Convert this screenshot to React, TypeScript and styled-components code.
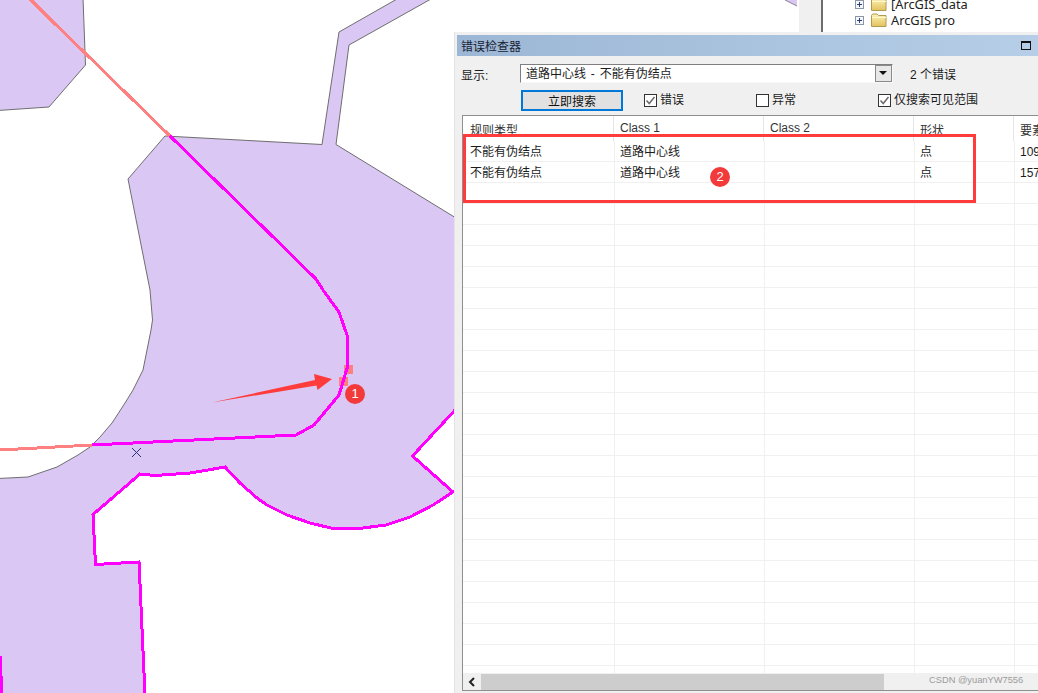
import React from "react";
import styled, { createGlobalStyle } from "styled-components";

const COLUMNS = ["规则类型", "Class 1", "Class 2", "形状", "要素类"];
const ERRORS = [
  ["不能有伪结点", "道路中心线", "", "点", "1094"],
  ["不能有伪结点", "道路中心线", "", "点", "1573"],
];
const ROW_COUNT = 26;

// shared outline of the lower road edge, used for the fill and the magenta line
const LOWER_EDGE =
  "L412.5 456 L453 492 L433 505 L410 517 L386 525 L363 528 H331 L310 523 L287 515 L267 505 L257 498 L240 483 L225 467 L208 470 L190 473 L155 475.5 L140 474 L93 514.5 L95.5 564.5 L139 562 L145 695";

const CheckMark = () => (
  <svg width="11" height="11" viewBox="0 0 11 11">
    <path d="M1.5 5.5 L4.2 8.5 L9.5 2" fill="none" stroke="#6b6b6b" strokeWidth="1.5" />
  </svg>
);

const Folder = () => (
  <svg width="16" height="14" viewBox="0 0 16 14">
    <defs>
      <linearGradient id="folderFill" x1="0" y1="0" x2="0" y2="1">
        <stop offset="0" stopColor="#fdf3b8" />
        <stop offset="1" stopColor="#e2c25c" />
      </linearGradient>
    </defs>
    <path d="M0.5 2.5 L1.5 1 H6 L7.5 2.5 H15 V13.5 H0.5 Z" fill="url(#folderFill)" stroke="#b19a52" />
    <path d="M1 4.5 H15" stroke="#fff8d0" />
  </svg>
);

const MapView = () => (
  <MapSvg viewBox="0 0 454 693">
    <g fill="#dac7f4" stroke="#6e6e6e" strokeWidth="1">
      <path d="M-2 -2 H83 L85.5 65 L49 107 L-2 110.5 Z" />
      <path
        d={`M165 136 L322 144.5 L339 32 L397 -1 H431 L349 45 L336 144.5 L456 218 V409 ${LOWER_EDGE} H-2 V478.5 L28 477 L57 467 L78 455 L90 447 L100 437 L112 423 L125 403 L133 390 L143 370 L148 345 L151 330 L152.5 320 L150 290 L128 179 Z`}
      />
    </g>
    <rect x="344" y="365" width="9" height="9" fill="#ff8080" />
    <rect x="339" y="377" width="9" height="9" fill="#ff8080" />
    <g fill="none" strokeWidth="3" shapeRendering="crispEdges">
      <path d="M30 -1 L52 21 L85 53 L128 95 L170 136" stroke="#ff8080" />
      <path d="M92 445 L0 450" stroke="#ff8080" />
      <path
        d="M170 136 L218 183 L266 230 L316 279 L323 290 L339 312 L347 335 L348 365 L339 395 L314 425 L296 435 L92 445"
        stroke="#ff00ff"
      />
      <path d={`M456 409 ${LOWER_EDGE}`} stroke="#ff00ff" />
      <path d="M0 656 L2 695" stroke="#ff00ff" />
    </g>
    <path d="M132 448 L141 457 M141 448 L132 457" stroke="#26337e" strokeWidth="1" />
    <path d="M212 402.5 L315 380 L314 374 L332 379 L317.5 390 L316.5 385.5 Z" fill="#ff3b3b" />
  </MapSvg>
);

export default function App() {
  return (
    <>
      <GlobalStyle />
      <Screen>
        <MapPane>
          <MapView />
          <Badge $left={345} $top={384}>1</Badge>
        </MapPane>
        <RightColumn>
          <TopStrip>
            <CornerSvg viewBox="0 0 345 32">
              <path d="M331 0 L343 6 V0 Z" fill="#dac7f4" />
              <path d="M331 0 L343 6" stroke="#8a8296" fill="none" />
            </CornerSvg>
            <DockGutter />
            <Tree>
              <TreeRow>
                <PlusBox />
                <Folder />
                <span>[ArcGIS_data</span>
              </TreeRow>
              <TreeRow>
                <PlusBox />
                <Folder />
                <span>ArcGIS pro</span>
              </TreeRow>
            </Tree>
          </TopStrip>
          <Panel>
            <TitleBar>
              <span>错误检查器</span>
              <RestoreIcon />
            </TitleBar>
            <Toolbar>
              <ShowRow>
                <ShowLabel>显示:</ShowLabel>
                <SelectBox>
                  <span>道路中心线 - 不能有伪结点</span>
                  <SelectArrow />
                </SelectBox>
                <ErrorCount>2 个错误</ErrorCount>
              </ShowRow>
              <ActionRow>
                <SearchButton>立即搜索</SearchButton>
                <CheckItem $width={112}>
                  <CheckBox><CheckMark /></CheckBox>
                  错误
                </CheckItem>
                <CheckItem $width={122}>
                  <CheckBox />
                  异常
                </CheckItem>
                <CheckItem $width={130}>
                  <CheckBox><CheckMark /></CheckBox>
                  仅搜索可见范围
                </CheckItem>
              </ActionRow>
            </Toolbar>
            <TableFrame>
              <HeaderRow>
                {COLUMNS.map((name) => (
                  <HeaderCell key={name}>{name}</HeaderCell>
                ))}
              </HeaderRow>
              <TableBody>
                {Array.from({ length: ROW_COUNT }, (_, i) => (
                  <BodyRow key={i}>
                    {COLUMNS.map((name, c) => (
                      <BodyCell key={name}>{ERRORS[i]?.[c]}</BodyCell>
                    ))}
                  </BodyRow>
                ))}
              </TableBody>
              <ScrollBar>
                <ScrollArrow>
                  <svg width="8" height="10" viewBox="0 0 8 10">
                    <path d="M6 1 L2 5 L6 9" fill="none" stroke="#222" strokeWidth="2" />
                  </svg>
                </ScrollArrow>
                <ScrollThumb />
              </ScrollBar>
              <RedBox />
              <Badge $left={247} $top={51}>2</Badge>
              <Watermark>CSDN @yuanYW7556</Watermark>
            </TableFrame>
          </Panel>
        </RightColumn>
      </Screen>
    </>
  );
}

const GlobalStyle = createGlobalStyle`
  html, body {
    margin: 0;
    padding: 0;
    background: #fff;
  }
  body {
    font-family: "Liberation Sans", "Noto Sans CJK SC", sans-serif;
    font-size: 12px;
    color: #1c1c1c;
  }
`;

const Screen = styled.div`
  display: flex;
  width: 1038px;
  height: 693px;
  overflow: hidden;
`;

const MapPane = styled.div`
  position: relative;
  flex: 0 0 454px;
  height: 693px;
  z-index: 1;
`;

const MapSvg = styled.svg`
  display: block;
  width: 454px;
  height: 693px;
`;

const Badge = styled.div<{ $left: number; $top: number }>`
  position: absolute;
  left: ${(p) => p.$left}px;
  top: ${(p) => p.$top}px;
  width: 20px;
  height: 20px;
  border-radius: 50%;
  background: #f23a3a;
  color: #fff;
  font-size: 13px;
  line-height: 20px;
  text-align: center;
  z-index: 3;
`;

const RightColumn = styled.div`
  flex: 0 0 584px;
  min-width: 0;
  display: flex;
  flex-direction: column;
  height: 693px;
  overflow: hidden;
`;

const TopStrip = styled.div`
  flex: 0 0 32px;
  display: flex;
  overflow: hidden;
  background: #fff;
`;

const CornerSvg = styled.svg`
  flex: 0 0 345px;
  height: 32px;
`;

const DockGutter = styled.div`
  flex: 0 0 22px;
  background: #f0f0f0;
  border-right: 2px solid #6d6d6d;
`;

const Tree = styled.div`
  flex: 1;
  padding: 0 0 0 32px;
  margin-top: -4px;
  font-family: "Noto Sans", "Noto Sans CJK SC", sans-serif;
  font-size: 12.8px;
  color: #222;
`;

const TreeRow = styled.div`
  display: flex;
  align-items: center;
  height: 16px;

  svg {
    margin-left: 7px;
    margin-right: 4px;
  }
`;

const PlusBox = styled.i`
  position: relative;
  display: block;
  box-sizing: border-box;
  width: 9px;
  height: 9px;
  border: 1px solid #8b97a8;
  background:
    linear-gradient(#2a3f7a, #2a3f7a) center / 5px 1px no-repeat,
    linear-gradient(#2a3f7a, #2a3f7a) center / 1px 5px no-repeat,
    #f4f6fa;
`;

const Panel = styled.section`
  flex: 1;
  display: flex;
  flex-direction: column;
  min-height: 0;
  min-width: 0;
  box-sizing: border-box;
  padding: 3px 0 2px 2px;
  border-left: 1px solid #e3e3e3;
  background: #f0f0f0;
`;

const TitleBar = styled.header`
  flex: 0 0 21px;
  display: flex;
  align-items: center;
  justify-content: space-between;
  padding: 0 7px 0 4px;
  background: linear-gradient(90deg, #9cb7d5, #b6cee7);
  color: #1a2233;
`;

const RestoreIcon = styled.i`
  display: block;
  box-sizing: border-box;
  width: 10px;
  height: 9px;
  border: 1px solid #111;
  border-top-width: 2px;
`;

const Toolbar = styled.div`
  flex: 0 0 59px;
  display: flex;
  flex-direction: column;
  padding: 8px 0 0 4px;
  box-sizing: border-box;
`;

const ShowRow = styled.div`
  display: flex;
  align-items: center;
  height: 19px;
`;

const ShowLabel = styled.label`
  flex: 0 0 59px;
  padding-top: 1px;
`;

const SelectBox = styled.div`
  position: relative;
  flex: 0 0 373px;
  box-sizing: border-box;
  height: 19px;
  padding-left: 5px;
  line-height: 19px;
  word-spacing: 1.5px;
  background: #fff;
  border: 1px solid;
  border-color: #7f7f7f #f8f8f8 #f8f8f8 #7f7f7f;
`;

const SelectArrow = styled.i`
  position: absolute;
  top: 0;
  right: 0;
  box-sizing: border-box;
  width: 17px;
  height: 17px;
  background: #e8e8e8;
  border: 1px solid #8a8a8a;

  &::after {
    content: "";
    position: absolute;
    left: 3px;
    top: 5px;
    border-style: solid;
    border-width: 4px 4px 0;
    border-color: #111 transparent transparent;
  }
`;

const ErrorCount = styled.span`
  margin-left: 17px;
`;

const ActionRow = styled.div`
  display: flex;
  align-items: center;
  margin-top: 7px;
  padding-left: 60px;
`;

const SearchButton = styled.button`
  box-sizing: border-box;
  flex: 0 0 102px;
  height: 21px;
  margin-right: 21px;
  padding: 0;
  background: #e1e1e1;
  border: 2px solid #0078d7;
  border-radius: 0;
  color: #111;
  font: inherit;
`;

const CheckItem = styled.label<{ $width: number }>`
  flex: 0 0 ${(p) => p.$width}px;
  display: flex;
  align-items: center;
  gap: 3px;
  line-height: 17px;
  height: 19px;
`;

const CheckBox = styled.span`
  box-sizing: border-box;
  display: flex;
  align-items: center;
  justify-content: center;
  width: 13px;
  height: 13px;
  background: #fff;
  border: 1px solid #333;
`;

const TableFrame = styled.div`
  position: relative;
  flex: 1;
  display: flex;
  flex-direction: column;
  min-height: 0;
  margin-left: 5px;
  background: #fff;
  border: 1px solid #8f8f8f;
  border-right: none;
  width: 600px;
`;

const ColumnGrid = styled.div`
  display: grid;
  grid-template-columns: 152px 150px 150px 100px 60px;
`;

const HeaderRow = styled(ColumnGrid)`
  flex: 0 0 25px;
  grid-template-columns: 151px 150px 150px 100px 60px;
  overflow: hidden;
`;

const HeaderCell = styled.div`
  padding: 5px 0 0 6px;
  border-right: 1px solid #e6e6e6;
  white-space: nowrap;
  overflow: hidden;
  color: #333;

  &:first-child {
    padding-left: 7px;
  }
`;

const TableBody = styled.div`
  flex: 1;
  min-height: 0;
  overflow: hidden;
`;

const BodyRow = styled(ColumnGrid)`
  height: 21px;
  box-sizing: border-box;
  border-bottom: 1px solid #f0f0f0;
`;

const BodyCell = styled.div`
  padding: 1px 0 0 5px;
  line-height: 20px;
  border-right: 1px solid #f0f0f0;
  white-space: nowrap;
  overflow: hidden;

  &:first-child {
    padding-left: 7px;
  }
`;

const ScrollBar = styled.div`
  flex: 0 0 17px;
  display: flex;
  align-items: stretch;
  padding-top: 1px;
  box-sizing: border-box;
  background: #f0f0f0;
`;

const ScrollArrow = styled.span`
  flex: 0 0 18px;
  display: flex;
  align-items: center;
  justify-content: center;
`;

const ScrollThumb = styled.span`
  flex: 0 0 403px;
  background: #cdcdcd;
`;

const RedBox = styled.div`
  position: absolute;
  left: 0;
  top: 18px;
  width: 513px;
  height: 69px;
  box-sizing: border-box;
  border: 3px solid #ff3b3b;
`;

const Watermark = styled.span`
  position: absolute;
  left: 466px;
  bottom: 5px;
  font-size: 9.3px;
  color: #9b9b9b;
`;
